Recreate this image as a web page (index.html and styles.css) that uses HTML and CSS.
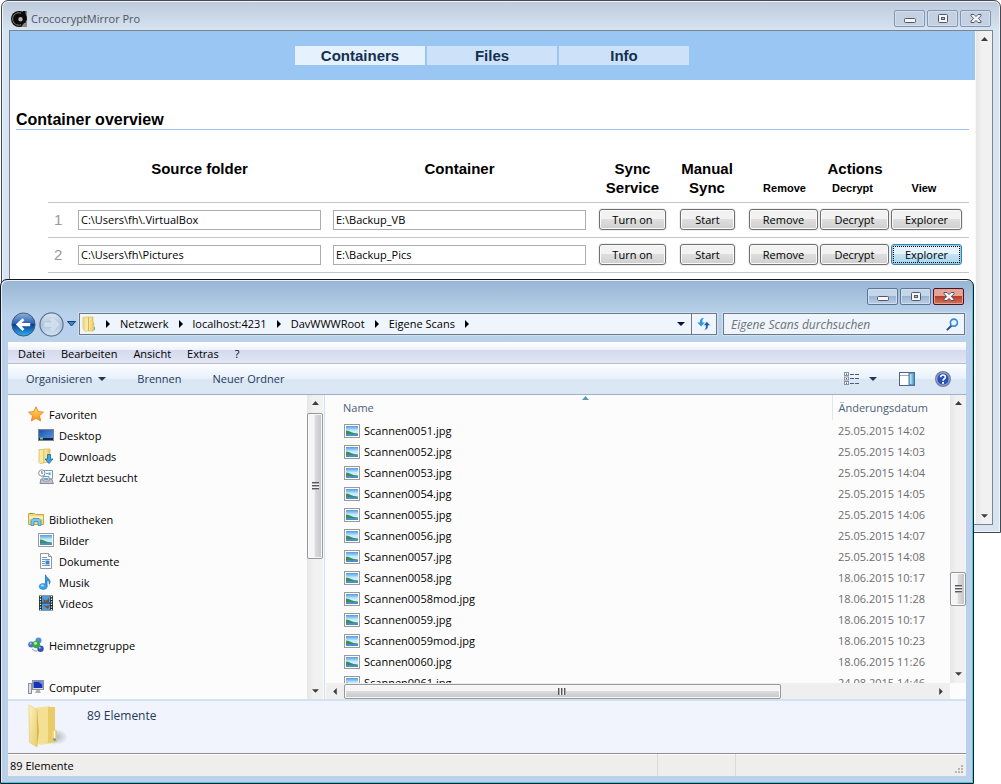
FILE: index.html
```html
<!DOCTYPE html>
<html lang="de">
<head>
<meta charset="utf-8">
<title>CrococryptMirror Pro</title>
<link rel="stylesheet" href="styles.css">
</head>
<body>
<svg class="defs" aria-hidden="true">
  <defs>
    <linearGradient id="g-sky" x1="0" y1="0" x2="0" y2="1"><stop offset="0" stop-color="#4f9ae6"/><stop offset=".45" stop-color="#c4ebfb"/><stop offset="1" stop-color="#e8f8ff"/></linearGradient>
    <linearGradient id="g-folder" x1="0" y1="0" x2="1" y2="0"><stop offset="0" stop-color="#fbefb4"/><stop offset="1" stop-color="#e6c65a"/></linearGradient>
    <linearGradient id="g-leaf" x1="0" y1="0" x2="1" y2="1"><stop offset="0" stop-color="#fdf3c3"/><stop offset="1" stop-color="#e9cb68"/></linearGradient>
    <linearGradient id="g-star" x1="0" y1="0" x2="0" y2="1"><stop offset="0" stop-color="#ffe36b"/><stop offset="1" stop-color="#fb8f1c"/></linearGradient>
    <linearGradient id="g-blue" x1="0" y1="0" x2="0" y2="1"><stop offset="0" stop-color="#8fb3dc"/><stop offset=".45" stop-color="#2a63b4"/><stop offset=".5" stop-color="#0a3a94"/><stop offset="1" stop-color="#2fb4f4"/></linearGradient>
    <linearGradient id="g-pale" x1="0" y1="0" x2="0" y2="1"><stop offset="0" stop-color="#dbe6f2"/><stop offset=".5" stop-color="#b0c5dc"/><stop offset="1" stop-color="#d3e3f4"/></linearGradient>
    <linearGradient id="g-screen" x1="0" y1="0" x2="1" y2="1"><stop offset="0" stop-color="#1c4fa8"/><stop offset="1" stop-color="#5b9be6"/></linearGradient>
    <radialGradient id="g-shade"><stop offset="0" stop-color="#8a94a8" stop-opacity=".7"/><stop offset="1" stop-color="#8a94a8" stop-opacity="0"/></radialGradient>
  </defs>
  <symbol id="i-picture" viewBox="0 0 16 14">
    <rect x=".5" y=".5" width="15" height="13" fill="#fff" stroke="#9a9a9a"/>
    <rect x="2" y="2" width="12" height="10" fill="url(#g-sky)"/>
    <path d="M2 6.500q3 .2 5 1.500t7 1.500v1H2z" fill="#3f8a60"/><path d="M2 10h12v2H2z" fill="#4a90c4"/>
  </symbol>
  <symbol id="i-min" viewBox="0 0 12 12"><rect x=".5" y="5.500" width="11" height="4" rx="1" fill="#f6f6f8" stroke="#535666"/></symbol>
  <symbol id="i-max" viewBox="0 0 12 12"><rect x="1.500" y="1.500" width="9" height="8" rx="1" fill="#f6f6f8" stroke="#535666"/><rect x="4.500" y="4.500" width="3" height="2" fill="#a9c0dc" stroke="#535666"/></symbol>
  <symbol id="i-close" viewBox="0 0 12 12"><path d="M1 1.500h3L6 3.600 8 1.500h3v1.300L8.300 5.500 11 8.200v1.300H8L6 7.400 4 9.500H1V8.200l2.700-2.700L1 2.800z" fill="#f8f8f8" stroke="#535666"/></symbol>
  <symbol id="i-up" viewBox="0 0 7 4"><path d="M0 4l3.500-4L7 4z"/></symbol>
  <symbol id="i-down" viewBox="0 0 8 4"><path d="M0 0h8L4 4z"/></symbol>
  <symbol id="i-right" viewBox="0 0 4 8"><path d="M0 0l4 4-4 4z"/></symbol>
  <symbol id="i-left" viewBox="0 0 4 8"><path d="M4 0L0 4l4 4z"/></symbol>
</svg>

<main class="desktop">
  <section class="window app" aria-label="CrococryptMirror Pro">
    <header class="titlebar">
      <svg class="app-icon" viewBox="0 0 16 16" aria-hidden="true"><path d="M8 0h8v16H8z" fill="#8b8782"/><circle cx="8" cy="8" r="8" fill="#0b0b0b"/><path d="M11 14.500L16 9v7h-5z" fill="#8b8782"/><path d="M10 2.200a6.200 6.200 0 1 0 0 11.600" fill="none" stroke="#8b8782" stroke-width="1"/><circle cx="9.500" cy="8.300" r="3.300" fill="#b4b2ae" stroke="#0b0b0b" stroke-width="2.200"/><path d="M12 0h2.500v12H12z" fill="#0b0b0b"/></svg>
      <span class="title">CrococryptMirror Pro</span>
      <div class="caption-buttons">
        <button type="button" aria-label="Minimize"><svg><use href="#i-min"/></svg></button>
        <button type="button" aria-label="Maximize"><svg><use href="#i-max"/></svg></button>
        <button type="button" aria-label="Close"><svg><use href="#i-close"/></svg></button>
      </div>
    </header>
    <div class="app-body">
      <div class="page">
        <nav class="tabs">
          <a class="tab current" href="#containers">Containers</a>
          <a class="tab" href="#files">Files</a>
          <a class="tab" href="#info">Info</a>
        </nav>
        <div class="page-content">
          <h1>Container overview</h1>
          <table class="containers">
            <colgroup><col class="c-num"><col class="c-source"><col><col class="c-sync"><col class="c-manual"><col class="c-act"><col class="c-act"><col class="c-view"></colgroup>
            <thead>
              <tr>
                <td rowspan="2"></td>
                <th rowspan="2" class="h-source">Source folder</th>
                <th rowspan="2" class="h-container">Container</th>
                <th rowspan="2">Sync<br>Service</th>
                <th rowspan="2" class="h-manual">Manual<br>Sync</th>
                <th colspan="3" class="h-manual">Actions</th>
              </tr>
              <tr class="sub"><th>Remove</th><th class="h-container">Decrypt</th><th class="h-source">View</th></tr>
            </thead>
            <tbody>
              <tr>
                <td class="num">1</td>
                <td><input type="text" aria-label="Source folder 1" value="C:\Users\fh\.VirtualBox"></td>
                <td class="target"><input type="text" aria-label="Container 1" value="E:\Backup_VB"></td>
                <td class="ctl"><button type="button">Turn on</button></td>
                <td class="ctl"><button type="button">Start</button></td>
                <td><button type="button">Remove</button></td>
                <td><button type="button">Decrypt</button></td>
                <td><button type="button">Explorer</button></td>
              </tr>
              <tr>
                <td class="num">2</td>
                <td><input type="text" aria-label="Source folder 2" value="C:\Users\fh\Pictures"></td>
                <td class="target"><input type="text" aria-label="Container 2" value="E:\Backup_Pics"></td>
                <td class="ctl"><button type="button">Turn on</button></td>
                <td class="ctl"><button type="button">Start</button></td>
                <td><button type="button">Remove</button></td>
                <td><button type="button">Decrypt</button></td>
                <td><button type="button" class="active">Explorer</button></td>
              </tr>
            </tbody>
          </table>
        </div>
      </div>
      <div class="scroll vertical app-scroll"><svg class="arrow"><use href="#i-up"/></svg><svg class="arrow"><use href="#i-down"/></svg></div>
    </div>
  </section>

  <section class="window explorer" aria-label="Explorer">
    <header class="titlebar">
      <div class="caption-buttons">
        <button type="button" aria-label="Minimieren"><svg><use href="#i-min"/></svg></button>
        <button type="button" aria-label="Maximieren"><svg><use href="#i-max"/></svg></button>
        <button type="button" class="close" aria-label="Schließen"><svg><use href="#i-close"/></svg></button>
      </div>
    </header>
    <div class="navbar">
      <div class="travel">
        <button type="button" aria-label="Zurück"><svg viewBox="0 0 26 26"><circle cx="13" cy="13" r="12" fill="url(#g-blue)" stroke="#44566f"/><path d="M5 13l7-6.500 2 2-3 3h9v3.200h-9l3 3-2 2z" fill="#fff"/></svg></button>
        <button type="button" aria-label="Vorwärts"><svg viewBox="0 0 26 26"><circle cx="13" cy="13" r="12" fill="url(#g-pale)" stroke="#5d7590" stroke-width="1.300"/><path d="M21 13l-7-6.500-2 2 3 3H6v3.200h9l-3 3 2 2z" fill="#cfdcea" stroke="#e6eef7" stroke-width=".7"/></svg></button>
        <button type="button" aria-label="Letzte Seiten"><svg class="recent" viewBox="0 0 9 6"><path d="M.5.5h8L4.500 5z" fill="#2b8bd6" stroke="#1a3c70"/></svg></button>
      </div>
      <div class="address">
        <svg class="folder" viewBox="0 0 14 16" aria-hidden="true"><path d="M1 1.500L6 1v13.500L3.500 15.500 1 13z" fill="#f3dc86" stroke="#dcb950" stroke-width=".6"/><path d="M6 1h5v5l1 1v7l-1 1H6z" fill="url(#g-folder)" stroke="#d9b64c" stroke-width=".6"/><path d="M3.500 2.500v13L6.500 14V1z" fill="#fae9a4"/><path d="M6.500 1v13.500" stroke="#cfa93f" stroke-width=".8"/><path d="M12.500 11v3" stroke="#4bb8e6"/></svg>
        <svg class="sep"><use href="#i-right"/></svg><a href="#netzwerk">Netzwerk</a>
        <svg class="sep"><use href="#i-right"/></svg><a href="#host">localhost:4231</a>
        <svg class="sep"><use href="#i-right"/></svg><a href="#root">DavWWWRoot</a>
        <svg class="sep"><use href="#i-right"/></svg><a href="#scans">Eigene Scans</a>
        <svg class="sep"><use href="#i-right"/></svg>
        <button type="button" class="history" aria-label="Verlauf"><svg class="tri"><use href="#i-down"/></svg></button>
        <button type="button" class="refresh" aria-label="Aktualisieren"><svg viewBox="0 0 14 14"><path d="M6.800.8Q2.500 1.500 2.800 5.500H.3l3.900 4 3.600-4H5.400Q5 2.700 6.800.8z" fill="#2a98e0"/><path d="M7.200 13.200q4.300-.7 4-4.700h2.500l-3.900-4-3.600 4h2.400q.4 2.800-1.400 4.700z" fill="#1f5cae" stroke="#eff5fc" stroke-width=".6"/></svg></button>
      </div>
      <div class="search">
        <input type="search" aria-label="Eigene Scans durchsuchen" placeholder="Eigene Scans durchsuchen">
        <svg viewBox="0 0 14 14" aria-hidden="true"><path d="M1.500 12.500L6 8" stroke="#26509c" stroke-width="2.200" stroke-linecap="round"/><circle cx="8.500" cy="5" r="3.800" fill="#e8f4fc" stroke="#3a86cf" stroke-width="1.700"/></svg>
      </div>
    </div>
    <div class="client">
      <nav class="menubar">
        <button type="button">Datei</button><button type="button">Bearbeiten</button><button type="button">Ansicht</button><button type="button">Extras</button><button type="button">?</button>
      </nav>
      <div class="toolbar">
        <button type="button" class="organize">Organisieren <svg class="tri"><use href="#i-down"/></svg></button>
        <button type="button">Brennen</button>
        <button type="button">Neuer Ordner</button>
        <div class="tools">
          <button type="button" class="view" aria-label="Ansicht ändern"><svg viewBox="0 0 16 14"><g fill="#fff" stroke="#8793a5"><rect x=".5" y=".5" width="4" height="3"/><rect x=".5" y="5" width="4" height="3"/><rect x=".5" y="9.500" width="4" height="3"/></g><path d="M2 6h1v1.500H2z" fill="#d33"/><path d="M2 1.500h1V3H2zM2 10.500h1V12H2z" fill="#37a"/><path d="M6 2.500h10M6 6.500h10M6 11.500h10" stroke="#4a5a78" stroke-dasharray="4 1"/></svg></button>
          <button type="button" aria-label="Weitere Optionen"><svg class="tri"><use href="#i-down"/></svg></button>
          <button type="button" class="pane" aria-label="Vorschaufenster"><svg viewBox="0 0 16 14"><rect x=".5" y=".5" width="15" height="13" fill="#fff" stroke="#4c6688"/><path d="M1 3.500h9" stroke="#9aabc0"/><path d="M10 1h5v12h-5z" fill="#6db9de" stroke="#4c7fa6"/><path d="M11 2h1.500v10H11z" fill="#b6e0f3"/></svg></button>
          <button type="button" class="help" aria-label="Hilfe"><svg viewBox="0 0 16 16"><circle cx="8" cy="8" r="7.300" fill="#2550bb" stroke="#7b8190" stroke-width="1.400"/><circle cx="8" cy="8" r="6.200" fill="none" stroke="#c9d0e2" stroke-width=".8"/><path d="M5.600 6.200Q5.700 4 8 4t2.400 2q0 1.200-1.300 2-1 .6-1 1.700" fill="none" stroke="#fff" stroke-width="1.700"/><circle cx="8" cy="11.900" r="1.100" fill="#fff"/></svg></button>
        </div>
      </div>
      <div class="panes">
        <aside class="tree">
          <ul>
            <li><svg viewBox="0 0 16 16"><path d="M8 .8l2.200 4.800 5.200.6-3.900 3.500 1.100 5.200L8 12.300l-4.600 2.600 1.100-5.200L.6 6.200l5.200-.6z" fill="url(#g-star)" stroke="#e88a2a"/></svg>Favoriten
              <ul>
                <li><svg viewBox="0 0 16 16"><rect x=".5" y="2.500" width="15" height="11" fill="url(#g-screen)" stroke="#7d8796"/><path d="M1 11h14v2H1z" fill="#16264a"/><path d="M2 10.500h3v2H2z" fill="#6dcf6a"/></svg>Desktop</li>
                <li><svg viewBox="0 0 16 16"><path d="M1 1.500h5V15l-4 .5-1-1z" fill="#fae9a0" stroke="#d9b651" stroke-width=".7"/><path d="M6 1h6v13.500H6z" fill="url(#g-folder)" stroke="#d9b651" stroke-width=".7"/><path d="M9.500 6.500h3V11H15l-4 4.500L7 11h2.500z" fill="#3ba3e8" stroke="#1c66ae" stroke-width=".8"/></svg>Downloads</li>
                <li><svg viewBox="0 0 16 16"><path d="M6 1.500h8.500V10H6z" fill="#f6f9fc" stroke="#8d99a8"/><path d="M8 4h2v1H8zM10.500 3.500h2V6h-2z" fill="#4aa5e2"/><path d="M3 10h10.500l2 4.500H2z" fill="#c2c7cd" stroke="#848e9a"/><path d="M5 7.500h6V12H5z" fill="#edf1f4" stroke="#8f99a5"/><path d="M6 9h4v2H6z" fill="#69a9cf"/><circle cx="3.800" cy="4" r="3.200" fill="#f8fafc" stroke="#8a95a3"/><path d="M3.800 2v2.300H5" fill="none" stroke="#4b5868" stroke-width=".8"/></svg>Zuletzt besucht</li>
              </ul>
            </li>
            <li><svg viewBox="0 0 16 16"><path d="M.5 2.500h6l1 1h8v10H.5z" fill="#f0d77c" stroke="#c9aa49"/><path d="M1 5h14v3H1z" fill="#faedb2"/><path d="M2 2h3v1H2z" fill="#59a957"/><path d="M3 14.500V9.500l2-2h6l2 2v5h-3v-4H6v4z" fill="#7cc6ec" stroke="#3e8bbf" stroke-width=".8"/></svg>Bibliotheken
              <ul>
                <li><svg viewBox="0 -1 16 16"><use href="#i-picture" width="16" height="14"/></svg>Bilder</li>
                <li><svg viewBox="0 0 16 16"><path d="M2.500.5h8l3 3v12h-11z" fill="#fff" stroke="#8e97a3"/><path d="M10.500.5v3h3" fill="#dde4ec" stroke="#8e97a3"/><path d="M4 4.500h5M4 6.500h8M4 8.500h3M4 10.500h3M4 12.500h8" stroke="#6f9bcb"/><path d="M7.500 7.500h4v4h-4z" fill="#3e86c8"/></svg>Dokumente</li>
                <li><svg viewBox="0 0 16 16"><path d="M7.500 12V.8q.4 2.200 2.600 3.500 3.400 2.500 1.300 6Q11.800 6.500 9 6v6.500" fill="#3aa3e8" stroke="#1d6fb8" stroke-width=".8"/><ellipse cx="5.200" cy="12.500" rx="4" ry="2.900" fill="#3aa3e8" stroke="#2b87d0" stroke-width=".7"/><ellipse cx="4.400" cy="11.600" rx="1.800" ry="1" fill="#aadcfa"/></svg>Musik</li>
                <li><svg viewBox="0 0 16 16"><path d="M1 .5h14v15H1z" fill="#1e2f33"/><path d="M4 1h8v6.500H4zM4 8.500h8V15H4z" fill="#4a9bd8"/><path d="M5 4l3 2 3-3v4H6zM5 10l4 1 3-1-2 4z" fill="#7d4a33"/><path d="M2.500 1v15M13.500 1v15" stroke="#e8eef0" stroke-width="1.300" stroke-dasharray="1.300 1.300"/></svg>Videos</li>
              </ul>
            </li>
            <li><svg viewBox="0 0 16 16"><circle cx="10.500" cy="3.500" r="3" fill="#4d8fd9"/><circle cx="3.200" cy="7.500" r="3" fill="#4a6fd0"/><circle cx="12.500" cy="11.800" r="3.200" fill="#3550b8"/><circle cx="8.300" cy="7.500" r="3.800" fill="#3aa845"/><circle cx="7.500" cy="6.300" r="1.500" fill="#b9eeb5"/><circle cx="2.600" cy="6.600" r="1" fill="#c3d9f8"/><circle cx="11.800" cy="10.800" r="1" fill="#a8bdf0"/><path d="M4 12q3 3 5 2" fill="none" stroke="#7c98d8"/></svg>Heimnetzgruppe</li>
            <li><svg viewBox="0 0 16 16"><rect x=".5" y="4.500" width="3" height="10" fill="#dde1e5" stroke="#8b929b"/><rect x="4.500" y="1.500" width="11" height="9" fill="#d7dade" stroke="#8b929b"/><path d="M5.500 2.500h9v6.500h-9z" fill="#1733b5"/><path d="M10 2.500h4.500V6z" fill="#6d8be8"/><path d="M8.500 11h3l1.500 3H7z" fill="#a9afb7"/></svg>Computer</li>
          </ul>
        </aside>
        <div class="scroll vertical tree-scroll"><svg class="arrow"><use href="#i-up"/></svg><span class="thumb"></span><svg class="arrow"><use href="#i-down"/></svg></div>
        <div class="files">
          <div class="file-view">
            <svg class="sort"><use href="#i-up"/></svg>
            <div class="list">
              <table>
                <colgroup><col><col class="c-date"></colgroup>
                <thead><tr><th>Name</th><th>Änderungsdatum</th></tr></thead>
                <tbody>
                  <tr><td><svg><use href="#i-picture"/></svg>Scannen0051.jpg</td><td>25.05.2015 14:02</td></tr>
                  <tr><td><svg><use href="#i-picture"/></svg>Scannen0052.jpg</td><td>25.05.2015 14:03</td></tr>
                  <tr><td><svg><use href="#i-picture"/></svg>Scannen0053.jpg</td><td>25.05.2015 14:04</td></tr>
                  <tr><td><svg><use href="#i-picture"/></svg>Scannen0054.jpg</td><td>25.05.2015 14:05</td></tr>
                  <tr><td><svg><use href="#i-picture"/></svg>Scannen0055.jpg</td><td>25.05.2015 14:06</td></tr>
                  <tr><td><svg><use href="#i-picture"/></svg>Scannen0056.jpg</td><td>25.05.2015 14:07</td></tr>
                  <tr><td><svg><use href="#i-picture"/></svg>Scannen0057.jpg</td><td>25.05.2015 14:08</td></tr>
                  <tr><td><svg><use href="#i-picture"/></svg>Scannen0058.jpg</td><td>18.06.2015 10:17</td></tr>
                  <tr><td><svg><use href="#i-picture"/></svg>Scannen0058mod.jpg</td><td>18.06.2015 11:28</td></tr>
                  <tr><td><svg><use href="#i-picture"/></svg>Scannen0059.jpg</td><td>18.06.2015 10:17</td></tr>
                  <tr><td><svg><use href="#i-picture"/></svg>Scannen0059mod.jpg</td><td>18.06.2015 10:23</td></tr>
                  <tr><td><svg><use href="#i-picture"/></svg>Scannen0060.jpg</td><td>18.06.2015 11:26</td></tr>
                  <tr><td><svg><use href="#i-picture"/></svg>Scannen0061.jpg</td><td>24.08.2015 14:46</td></tr>
                </tbody>
              </table>
            </div>
            <div class="scroll vertical list-scroll"><svg class="arrow"><use href="#i-up"/></svg><span class="thumb"></span><svg class="arrow"><use href="#i-down"/></svg></div>
          </div>
          <div class="scroll horizontal"><svg class="arrow side"><use href="#i-left"/></svg><span class="thumb"></span><svg class="arrow side"><use href="#i-right"/></svg></div>
        </div>
      </div>
      <div class="details">
        <svg viewBox="0 0 40 44" aria-hidden="true"><ellipse cx="27" cy="33" rx="13" ry="8" fill="url(#g-shade)"/><path d="M9 3l18 .5V26l2 1v11l-17 3z" fill="url(#g-folder)"/><path d="M8 4l14-2v34l-12 5z" fill="#f4e093"/><path d="M20 3l7 0v23h-3v12l-4 1z" fill="#e9cb68"/><path d="M.8 1L9 5.500V43L1.500 38.500z" fill="url(#g-leaf)" stroke="#e8cf7e" stroke-width=".7"/><path d="M9 5.500l2 22-2 15.500z" fill="#d9b64c"/><path d="M26.500 27v9" stroke="#fff" stroke-width="1.500"/><circle cx="26.500" cy="35.500" r="1.300" fill="#3f93e0"/></svg>
        <span>89 Elemente</span>
      </div>
      <footer class="status"><span class="s-main">89 Elemente</span><span class="s-mid"></span><span class="s-end"><svg viewBox="0 0 9 9"><path d="M6 0h2v2H6zM3 3h2v2H3zM6 3h2v2H6zM0 6h2v2H0zM3 6h2v2H3zM6 6h2v2H6z" fill="#b9b7b6"/></svg></span></footer>
    </div>
  </section>
</main>
</body>
</html>
```
FILE: styles.css
```css
* { box-sizing: border-box; }
body { margin: 0; background: #fff; color: #000; font: 11px/16px "Open Sans", "Noto Sans", sans-serif; }
button { margin: 0; padding: 0; border: 0; background: none; color: inherit; font: inherit; }
a { color: inherit; text-decoration: none; }
svg { display: block; flex: none; }
ul { margin: 0; padding: 0; list-style: none; }
.defs { position: absolute; width: 0; height: 0; }
.desktop { position: relative; height: 100vh; overflow: hidden; }

/* windows */
.window { position: absolute; display: flex; flex-direction: column; border: 1px solid #454a52; border-radius: 7px 7px 0 0; }
.app { inset: 0 0 251px 1px; padding: 0 7px 7px; background: linear-gradient(#bccada, #d7e4f2 30px); box-shadow: inset 0 0 0 1px #eef4fa; }
.explorer { inset: 279px 27px 0 0; padding: 0 7px 7px; border-color: #15181c; background: linear-gradient(#98b4d2, #b9d1ea 34px); box-shadow: inset -1px -1px 0 #35cfe8, inset 1px 1px 0 #e4eef8; }
.titlebar { display: flex; flex: none; align-items: center; gap: 4px; color: #50555c; }
.app .titlebar { height: 29px; padding: 6px 2px 0; }
.explorer .titlebar { height: 25px; padding: 8px 2px 0; }
.app-icon { width: 16px; height: 16px; }
.title { line-height: 16px; }
.caption-buttons { display: flex; gap: 2px; margin-left: auto; }
.caption-buttons button { display: grid; place-items: center; width: 31px; height: 17px; border: 1px solid #8494b4; border-radius: 2px; background: #c3d1e3; box-shadow: inset 0 0 0 1px #d3deec; }
.caption-buttons svg { width: 12px; height: 12px; }
.explorer .caption-buttons button { border-color: #5d7695; background: linear-gradient(#c3d6ea 45%, #9ab5d3 50%, #b9d0e8); }
.explorer .caption-buttons .close { border-color: #4b1420; background: linear-gradient(#e5a498 45%, #bb3c27 50%, #d4735c); box-shadow: inset 0 0 0 1px #e2a193; }

/* scroll bars */
.scroll { display: flex; flex: none; align-items: center; background: linear-gradient(90deg, #e6e6e6, #f1f1f1 40%); }
.vertical { flex-direction: column; width: 16px; }
.horizontal { height: 16px; background: #efefef; }
.arrow { width: 7px; height: 4px; margin: 6px 0; fill: #3c3c3c; }
.arrow.side { width: 4px; height: 7px; margin: 0 7px; }
.arrow:last-child { margin-top: auto; }
.arrow.side:last-child { margin: 0 7px 0 auto; }
.thumb { display: grid; place-items: center; border: 1px solid #979797; border-radius: 2px; background: linear-gradient(90deg, #f5f5f5 45%, #dcdcde 50%, #c4c4c8); box-shadow: inset 0 0 0 1px #fafafa; }
.vertical .thumb { width: 16px; }
.thumb::before { content: ""; width: 7px; height: 8px; background: repeating-linear-gradient(#55585c 0 1px, #b0b0b0 1px 2px, #f4f4f4 2px 3px); }
.horizontal .thumb { width: 70%; height: 15px; background: linear-gradient(#f5f5f5 45%, #dcdcde 50%, #c4c4c8); }
.horizontal .thumb::before { width: 8px; height: 7px; background: repeating-linear-gradient(90deg, #55585c 0 1px, #b0b0b0 1px 2px, #f4f4f4 2px 3px); }

/* container overview */
.app-body { display: flex; flex: 1; min-height: 0; border: 1px solid #7c838e; background: #fff; }
.page { flex: 1; font-family: "Liberation Sans", Arial, sans-serif; }
.app-scroll { width: 17px; border-left: 1px solid #f8f8f8; }
.tabs { display: flex; justify-content: center; gap: 2px; height: 49px; padding: 15px 1px 0 0; background: #9ac6f3; }
.tab { width: 130px; height: 19px; background: #cde2f9; color: #12304f; font-size: 15px; font-weight: bold; line-height: 20px; text-align: center; }
.tab.current { background: #e5f1fd; }
.page-content { padding: 30px 6px 0; }
h1 { margin: 0; border-bottom: 1px solid #9fc3ea; font-size: 16px; line-height: 19px; }
.containers { width: calc(100% - 32px); margin: 29px 0 0 32px; border-collapse: collapse; table-layout: fixed; }
.containers td, .containers th { padding: 0; }
.containers th { font-size: 15px; line-height: 19px; vertical-align: top; }
.containers .sub th { height: 24px; font-size: 11px; line-height: 21px; }
.containers .h-source { padding-right: 12px; }
.containers .h-container { padding-right: 6px; }
.containers .h-manual { padding-right: 8px; }
.containers tbody tr { height: 35px; border-top: 1px solid #c6c6c6; border-bottom: 1px solid #c6c6c6; }
.containers .num { padding-left: 6px; color: #999; font-size: 15px; }
.containers input { display: block; width: calc(100% - 12px); height: 20px; padding: 0 2px; border: 1px solid #abadb3; background: #fff; font: 11px "Open Sans", "Noto Sans", sans-serif; }
.containers .target input { width: calc(100% - 6px); }
.containers button { display: block; width: 69px; height: 21px; border: 1px solid #707070; border-radius: 3px; background: linear-gradient(#f2f2f2 48%, #dedede 50%, #cfcfcf); box-shadow: inset 0 0 0 1px #fafafa, 0 0 0 1px #efefef; font: 11px/16px "Open Sans", "Noto Sans", sans-serif; }
.containers td:last-child button { width: 71px; }
.containers .ctl { padding-left: 7px; }
.containers .ctl button { width: 67px; }
.containers .ctl + .ctl button { width: 55px; }
.containers .active { border-color: #3c7fb1; background: linear-gradient(#e5f4fc 48%, #c4e5f6 50%, #a9d5ec); box-shadow: inset 0 0 0 1px #8fd0ee; outline: 1px dotted #000; outline-offset: -3px; }
.c-num { width: 30px; }
.c-source { width: 255px; }
.c-sync { width: 81px; }
.c-manual { width: 76px; }
.c-act { width: 71px; }
.c-view { width: 78px; }

/* explorer navigation */
.navbar { display: flex; flex: none; gap: 6px; height: 37px; padding: 8px 1px 7px 3px; }
.travel { display: flex; align-items: center; gap: 3px; width: 62px; }
.travel svg { width: 25px; height: 25px; }
.travel .recent { width: 9px; height: 6px; }
.address, .search { display: flex; align-items: center; border: 1px solid #6f7a88; background: #eff5fc; box-shadow: 0 0 0 1px #cfdff0; }
.address { flex: 1; padding-left: 2px; font-size: 11px; white-space: nowrap; }
.folder { width: 14px; height: 16px; }
.sep { width: 4px; height: 8px; margin: 0 10px; }
.tri { width: 8px; height: 4px; }
.history { width: 20px; height: 20px; margin-left: auto; padding-left: 6px; }
.history svg { fill: #001246; }
.refresh { display: grid; place-items: center; width: 25px; height: 20px; border-left: 1px solid #6f7a88; }
.refresh svg { width: 14px; height: 14px; }
.search { width: 242px; padding: 0 5px 0 7px; }
.search input { flex: 1; min-width: 0; padding: 0; border: 0; outline: 0; background: none; font: italic 12px "Open Sans", "Noto Sans", sans-serif; }
.search input::placeholder { color: #6d7176; opacity: 1; }
.search svg { width: 13px; height: 13px; }

/* explorer client area */
.client { display: flex; flex: 1; flex-direction: column; min-height: 0; background: #fcfcfc; }
.menubar { display: flex; flex: none; gap: 16px; height: 22px; padding: 2px 10px 0; border-bottom: 1px solid #b6bccc; background: linear-gradient(#fff, #eef1f9 8px, #d4d9ee 8px, #e2e6f5); }
.toolbar { display: flex; flex: none; align-items: center; gap: 31px; height: 31px; padding: 0 15px 0 18px; border-bottom: 1px solid #a0afc3; background: linear-gradient(#fcfeff, #e7f0fb 15px, #dce7f5 15px, #dbe6f4); color: #1e395b; }
.organize { display: flex; align-items: center; gap: 6px; }
.toolbar .tri { fill: #1e395b; }
.tools { display: flex; align-items: center; margin-left: auto; }
.view svg, .pane svg { width: 16px; height: 14px; }
.view { margin-right: 9px; }
.pane { margin: 0 20px 0 22px; }
.help svg { width: 16px; height: 16px; }
.panes { display: flex; flex: 1; min-height: 0; }
.tree { width: 299px; padding: 9px 0 0 20px; overflow: hidden; }
.tree li { line-height: 21px; }
.tree li > svg { float: left; width: 16px; height: 16px; margin: 2px 5px 0 0; }
.tree > ul > li { margin-bottom: 21px; }
.tree ul ul { padding-left: 10px; clear: left; }
.tree-scroll .thumb { height: 146px; margin-top: 2px; }
.files { display: flex; flex: 1; flex-direction: column; min-width: 0; margin-left: 1px; padding: 0 0 0 1px; border-left: 1px solid #cfe0f2; }
.file-view { position: relative; display: flex; flex: 1; min-height: 0; }
.sort { position: absolute; top: 1px; left: 40%; width: 7px; height: 4px; fill: #5b9ab8; }
.list { flex: 1; min-width: 0; overflow: hidden; }
.list table { width: 100%; border-collapse: collapse; table-layout: fixed; }
.c-date { width: 118px; }
.list th { height: 25px; padding: 0 0 0 17px; color: #4c607a; font-weight: normal; text-align: left; }
.list th + th { padding-left: 6px; border-left: 1px solid #dde8f4; }
.list td { height: 21px; padding: 0 0 0 18px; line-height: 21px; white-space: nowrap; }
.list td + td { padding-left: 6px; color: #6d6d6d; }
.list td svg { float: left; width: 16px; height: 14px; margin: 4px 4px 0 0; }
.list-scroll { padding-bottom: 1px; }
.list-scroll .thumb { height: 34px; margin-top: 161px; }
.horizontal { margin: 0 16px 0 0; }
.details { display: flex; flex: none; gap: 19px; height: 54px; padding: 3px 20px 0; border-top: 2px solid #d3e1f2; background: #f1f4fc; color: #1e395b; }
.details svg { width: 40px; height: 44px; }
.details span { font-size: 12px; line-height: 24px; }
.status { display: flex; flex: none; height: 23px; border-top: 1px solid #8e8e8e; background: #f0eded; box-shadow: inset 0 1px 0 #fff; }
.status span { padding: 4px 2px; border-right: 1px solid #dcdada; }
.s-main { flex: 1; }
.s-mid { width: 78px; }
.status .s-end { display: flex; align-items: end; justify-content: end; width: 230px; padding: 0 2px 2px; border: 0; }
.s-end svg { width: 9px; height: 9px; }
```
